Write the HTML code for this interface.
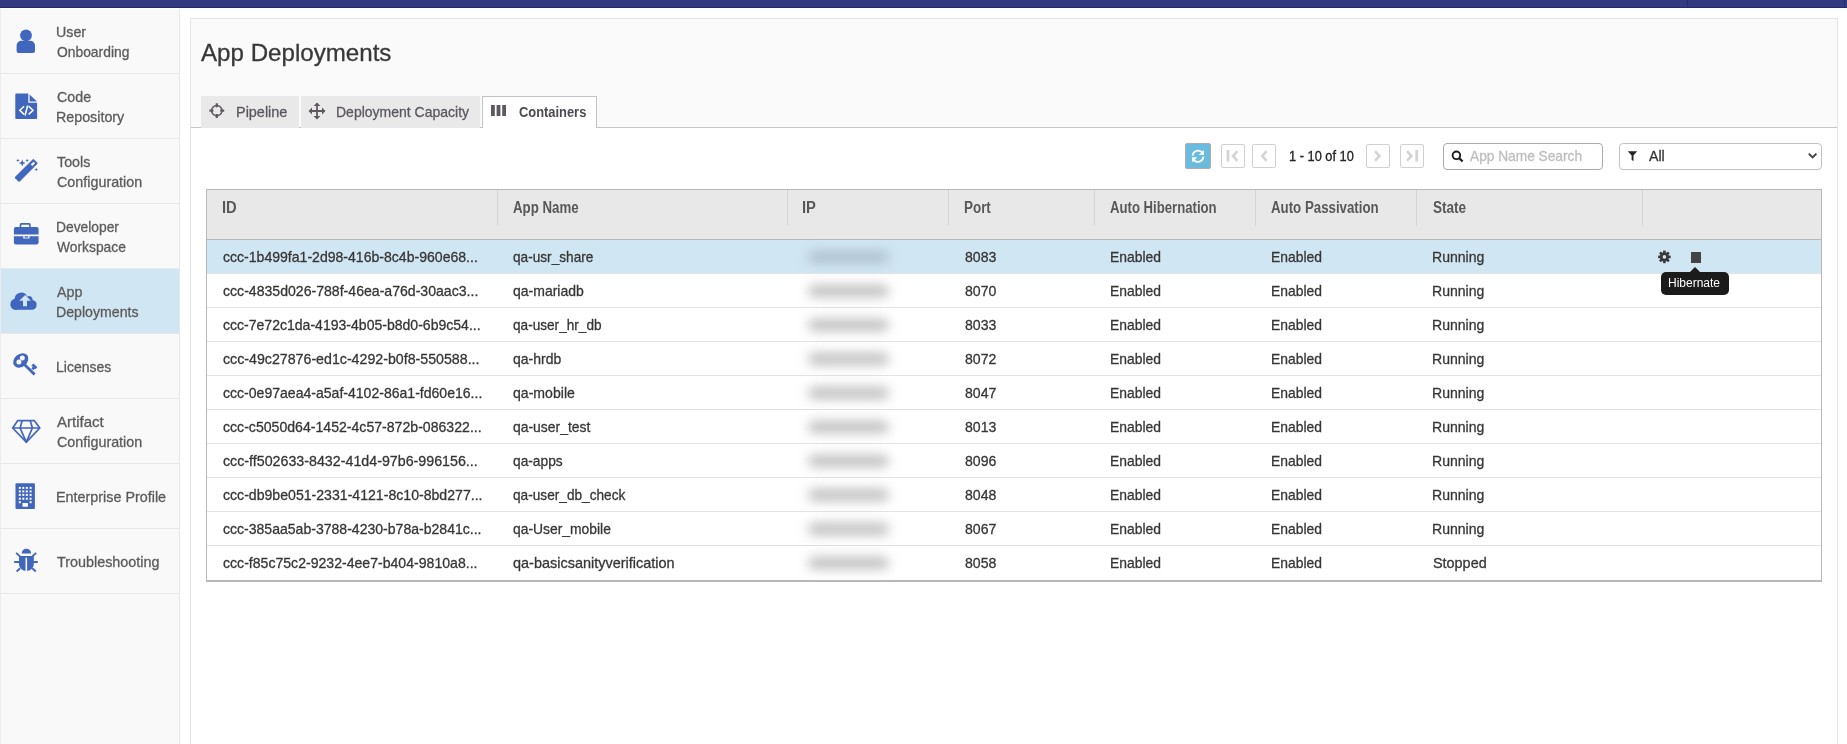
<!DOCTYPE html>
<html><head><meta charset="utf-8"><style>
*{box-sizing:border-box;margin:0;padding:0}
html,body{width:1847px;height:744px;overflow:hidden;background:#fff;font-family:"Liberation Sans",sans-serif}
.a{position:absolute}
.tx{position:absolute;white-space:nowrap;line-height:1;font-family:"Liberation Sans",sans-serif;-webkit-text-stroke:0.3px currentColor}
</style></head><body>
<div class="a" style="left:0px;top:0px;width:1847px;height:7px;background:#323a80;"></div><div class="a" style="left:0px;top:7px;width:1847px;height:1px;background:#232a73;"></div><div class="a" style="left:1687px;top:0px;width:1px;height:8px;background:#262c66;"></div><div class="a" style="left:1844px;top:0px;width:1px;height:8px;background:#262c66;"></div><div class="a" style="left:0px;top:9px;width:180px;height:735px;background:#f9f9f9;"></div><div class="a" style="left:0px;top:9px;width:1px;height:735px;background:#ececec;"></div><div class="a" style="left:179px;top:9px;width:1px;height:735px;background:#e6e6e6;"></div><div class="a" style="left:1px;top:73px;width:178px;height:1px;background:#e8e8e8;"></div><div class="a" style="left:1px;top:138px;width:178px;height:1px;background:#e8e8e8;"></div><div class="a" style="left:1px;top:203px;width:178px;height:1px;background:#e8e8e8;"></div><div class="a" style="left:1px;top:268px;width:178px;height:1px;background:#e8e8e8;"></div><div class="a" style="left:1px;top:333px;width:178px;height:1px;background:#e8e8e8;"></div><div class="a" style="left:1px;top:398px;width:178px;height:1px;background:#e8e8e8;"></div><div class="a" style="left:1px;top:463px;width:178px;height:1px;background:#e8e8e8;"></div><div class="a" style="left:1px;top:528px;width:178px;height:1px;background:#e8e8e8;"></div><div class="a" style="left:1px;top:593px;width:178px;height:1px;background:#e8e8e8;"></div><div class="a" style="left:1px;top:269px;width:178px;height:64px;background:#d1e6f3;"></div><div class="a" style="left:190px;top:18px;width:1648px;height:109px;background:#fafafa;"></div><div class="a" style="left:190px;top:18px;width:1648px;height:1px;background:#e4e4e4;"></div><div class="a" style="left:190px;top:18px;width:1px;height:726px;background:#e4e4e4;"></div><div class="a" style="left:1837px;top:18px;width:1px;height:726px;background:#e4e4e4;"></div><div class="a" style="left:191px;top:127px;width:1646px;height:1px;background:#c4c4c4;"></div><div class="a" style="left:201px;top:96px;width:98px;height:32px;background:#e9e9e9;"></div><div class="a" style="left:301px;top:96px;width:179px;height:32px;background:#e9e9e9;"></div><div class="a" style="left:482px;top:96px;width:115px;height:32px;background:#fff;"></div><div class="a" style="left:482px;top:96px;width:115px;height:1px;background:#c4c4c4;"></div><div class="a" style="left:482px;top:96px;width:1px;height:32px;background:#c4c4c4;"></div><div class="a" style="left:596px;top:96px;width:1px;height:32px;background:#c4c4c4;"></div><svg class="a" style="left:0;top:0" width="700" height="140" viewBox="0 0 700 140">
<g fill="none" stroke="#5e5860">
 <circle cx="216.8" cy="110.6" r="5.2" stroke-width="1.5"/>
 <path d="M216.8 103.2v4M216.8 114v4M209.4 110.6h4M220.2 110.6h4" stroke-width="2.2"/>
 <path d="M317 103.5v15M309.5 111h15" stroke-width="1.8"/>
</g>
<g fill="#5e5860">
 <path d="M317 102.6l3.4 3.4h-6.8zM317 119.4l3.4-3.4h-6.8zM308.6 111l3.4-3.4v6.8zM325.4 111l-3.4-3.4v6.8z"/>
 <rect x="491" y="105" width="3.8" height="11"/><rect x="496.6" y="105" width="3.8" height="11"/><rect x="502.2" y="105" width="3.8" height="11"/>
</g>
</svg><div class="a" style="left:1185px;top:143px;width:26px;height:26px;background:#6bbbde;border:1px solid #b5aaa5;border-radius:2px"></div><svg class="a" style="left:1185px;top:143px" width="26" height="26" viewBox="0 0 26 26">
<path d="M7.6 12.6A5.6 5.6 0 0 1 17.6 9.8" fill="none" stroke="#fff" stroke-width="1.8"/><path d="M18.9 6.9v5.2h-5.2z" fill="#fff"/>
<path d="M18.4 13.6A5.6 5.6 0 0 1 8.4 16.6" fill="none" stroke="#fff" stroke-width="1.8"/><path d="M7.1 19.4v-5.2h5.2z" fill="#fff"/>
</svg><div class="a" style="left:1221px;top:144px;width:24px;height:24px;border:1px solid #d0d0d0;border-radius:2px;background:#fff"></div><div class="a" style="left:1252px;top:144px;width:24px;height:24px;border:1px solid #d0d0d0;border-radius:2px;background:#fff"></div><div class="a" style="left:1366px;top:144px;width:24px;height:24px;border:1px solid #d0d0d0;border-radius:2px;background:#fff"></div><div class="a" style="left:1400px;top:144px;width:24px;height:24px;border:1px solid #d0d0d0;border-radius:2px;background:#fff"></div><svg class="a" style="left:0;top:0" width="1847" height="200" viewBox="0 0 1847 200" style="pointer-events:none">
<rect x="1226.6" y="150" width="2.8" height="11.6" fill="#d4d4d4"/>
<path d="M1237.4 151.2l-4.4 4.8 4.4 4.8M1266.6 151.2l-4.4 4.8 4.4 4.8M1375 151.2l4.4 4.8-4.4 4.8M1407 151.2l4.4 4.8-4.4 4.8" fill="none" stroke="#d4d4d4" stroke-width="2.6"/>
<rect x="1415.3" y="150" width="2.8" height="11.6" fill="#d4d4d4"/>
</svg><div class="a" style="left:1443px;top:143px;width:160px;height:27px;border:1px solid #aaaaaa;border-radius:4px;background:#fff"></div><svg class="a" style="left:1443px;top:143px" width="30" height="27" viewBox="0 0 30 27">
<circle cx="13.4" cy="12.3" r="3.8" fill="none" stroke="#1e1e1e" stroke-width="1.9"/><path d="M16.2 15.1l3.4 3.4" stroke="#1e1e1e" stroke-width="2.2"/>
</svg><div class="a" style="left:1619px;top:143px;width:203px;height:27px;border:1px solid #c2c2c2;border-radius:4px;background:#fff"></div><svg class="a" style="left:1619px;top:143px" width="203" height="27" viewBox="0 0 203 27">
<path d="M8.8 8.2h9.4L14.5 12.6V18.2L12.6 16.8V12.6z" fill="#262626"/>
<path d="M189.8 10.6l3.8 3.8 3.8-3.8" fill="none" stroke="#444" stroke-width="2"/>
</svg><div class="a" style="left:206px;top:189px;width:1616px;height:393px;background:#b8b8b8;"></div><div class="a" style="left:207px;top:190px;width:1614px;height:49px;background:#e8e8e8;"></div><div class="a" style="left:207px;top:239px;width:1614px;height:1px;background:#b8b8b8;"></div><div class="a" style="left:207px;top:240px;width:1614px;height:33px;background:#d1e6f3;"></div><div class="a" style="left:207px;top:273px;width:1614px;height:1px;background:#e3e3e3;"></div><div class="a" style="left:207px;top:274px;width:1614px;height:33px;background:#fff;"></div><div class="a" style="left:207px;top:307px;width:1614px;height:1px;background:#e3e3e3;"></div><div class="a" style="left:207px;top:308px;width:1614px;height:33px;background:#fff;"></div><div class="a" style="left:207px;top:341px;width:1614px;height:1px;background:#e3e3e3;"></div><div class="a" style="left:207px;top:342px;width:1614px;height:33px;background:#fff;"></div><div class="a" style="left:207px;top:375px;width:1614px;height:1px;background:#e3e3e3;"></div><div class="a" style="left:207px;top:376px;width:1614px;height:33px;background:#fff;"></div><div class="a" style="left:207px;top:409px;width:1614px;height:1px;background:#e3e3e3;"></div><div class="a" style="left:207px;top:410px;width:1614px;height:33px;background:#fff;"></div><div class="a" style="left:207px;top:443px;width:1614px;height:1px;background:#e3e3e3;"></div><div class="a" style="left:207px;top:444px;width:1614px;height:33px;background:#fff;"></div><div class="a" style="left:207px;top:477px;width:1614px;height:1px;background:#e3e3e3;"></div><div class="a" style="left:207px;top:478px;width:1614px;height:33px;background:#fff;"></div><div class="a" style="left:207px;top:511px;width:1614px;height:1px;background:#e3e3e3;"></div><div class="a" style="left:207px;top:512px;width:1614px;height:33px;background:#fff;"></div><div class="a" style="left:207px;top:545px;width:1614px;height:1px;background:#e3e3e3;"></div><div class="a" style="left:207px;top:546px;width:1614px;height:33px;background:#fff;"></div><div class="a" style="left:207px;top:579px;width:1614px;height:1px;background:#fff;"></div><div class="a" style="left:497px;top:190px;width:1px;height:36px;background:#d5d5d5;"></div><div class="a" style="left:787px;top:190px;width:1px;height:36px;background:#d5d5d5;"></div><div class="a" style="left:948px;top:190px;width:1px;height:36px;background:#d5d5d5;"></div><div class="a" style="left:1094px;top:190px;width:1px;height:36px;background:#d5d5d5;"></div><div class="a" style="left:1255px;top:190px;width:1px;height:36px;background:#d5d5d5;"></div><div class="a" style="left:1416px;top:190px;width:1px;height:36px;background:#d5d5d5;"></div><div class="a" style="left:1642px;top:190px;width:1px;height:36px;background:#d5d5d5;"></div><div class="a" style="left:808px;top:251px;width:81px;height:12px;background:#adbfcc;filter:blur(6px);border-radius:6px"></div><div class="a" style="left:808px;top:285px;width:81px;height:12px;background:#bebebe;filter:blur(6px);border-radius:6px"></div><div class="a" style="left:808px;top:319px;width:81px;height:12px;background:#bebebe;filter:blur(6px);border-radius:6px"></div><div class="a" style="left:808px;top:353px;width:81px;height:12px;background:#bebebe;filter:blur(6px);border-radius:6px"></div><div class="a" style="left:808px;top:387px;width:81px;height:12px;background:#bebebe;filter:blur(6px);border-radius:6px"></div><div class="a" style="left:808px;top:421px;width:81px;height:12px;background:#bebebe;filter:blur(6px);border-radius:6px"></div><div class="a" style="left:808px;top:455px;width:81px;height:12px;background:#bebebe;filter:blur(6px);border-radius:6px"></div><div class="a" style="left:808px;top:489px;width:81px;height:12px;background:#bebebe;filter:blur(6px);border-radius:6px"></div><div class="a" style="left:808px;top:523px;width:81px;height:12px;background:#bebebe;filter:blur(6px);border-radius:6px"></div><div class="a" style="left:808px;top:557px;width:81px;height:12px;background:#bebebe;filter:blur(6px);border-radius:6px"></div><svg class="a" style="left:1656px;top:249px" width="16" height="16" viewBox="0 0 16 16">
<g fill="#3a3a3a"><circle cx="8.4" cy="7.9" r="4.6"/>
<rect x="7.1" y="1.6" width="2.6" height="12.6"/><rect x="2.1" y="6.6" width="12.6" height="2.6"/>
<rect x="7.1" y="1.6" width="2.6" height="12.6" transform="rotate(45 8.4 7.9)"/><rect x="7.1" y="1.6" width="2.6" height="12.6" transform="rotate(-45 8.4 7.9)"/></g>
<circle cx="8.4" cy="7.9" r="1.8" fill="#d1e6f3"/>
</svg><div class="a" style="left:1691px;top:252px;width:10px;height:11px;background:#444;"></div><div class="a" style="left:1661px;top:272px;width:68px;height:23px;background:#1b1b1b;border-radius:5px"></div><svg class="a" style="left:1689px;top:266px" width="12" height="7" viewBox="0 0 12 7"><path d="M0.5 6.5L6 1 11.5 6.5z" fill="#1b1b1b"/></svg>
<svg id="icons" style="position:absolute;left:0;top:0" width="180" height="744" viewBox="0 0 180 744">
<g fill="#4066be">
 <!-- user -->
 <circle cx="26" cy="35.3" r="5.9"/>
 <path d="M21.6 40.8h8.8a4.6 4.6 0 0 1 4.6 4.6v5.6a1.9 1.9 0 0 1-1.9 1.9H18.5a1.9 1.9 0 0 1-1.9-1.9v-5.6a4.6 4.6 0 0 1 4.6-4.6z"/>
 <!-- code file -->
 <path d="M16.3 93.6h12v9.2h8.8v15.1a1 1 0 0 1-1 1H16.3a1 1 0 0 1-1-1V94.6a1 1 0 0 1 1-1z"/>
 <path d="M29.6 94.4l7.3 7.2h-7.3z"/>
</g>
<g fill="none" stroke="#fff" stroke-width="1.5">
 <path d="M24.1 106.2l-4.3 4.1 4.3 4.1M28.7 106.2l4.3 4.1-4.3 4.1M27.6 105.5l-2.5 10"/>
</g>
<g fill="#4066be">
 <!-- wand -->
 <path d="M15.2 176.8l17.4-17.4a1 1 0 0 1 1.4 0l3.2 3.2a1 1 0 0 1 0 1.4L19.8 181.4a1 1 0 0 1-1.4 0l-3.2-3.2a1 1 0 0 1 0-1.4z"/>
 <path d="M22.2 159.6l0.9 2.5 2.5 0.9-2.5 0.9-0.9 2.5-0.9-2.5-2.5-0.9 2.5-0.9z"/>
 <path d="M17.9 158.6l0.5 1.3 1.3 0.5-1.3 0.5-0.5 1.3-0.5-1.3-1.3-0.5 1.3-0.5z"/>
 <path d="M27.1 158.6l0.5 1.3 1.3 0.5-1.3 0.5-0.5 1.3-0.5-1.3-1.3-0.5 1.3-0.5z"/>
 <path d="M36.2 167.8l0.5 1.3 1.3 0.5-1.3 0.5-0.5 1.3-0.5-1.3-1.3-0.5 1.3-0.5z"/>
</g>
<path d="M30.7 164.5l2.8-2.8 1.6 1.6-2.8 2.8z" fill="#fff"/>
<g fill="#4066be">
 <!-- briefcase -->
 <path d="M21.2 223.1h8a1.5 1.5 0 0 1 1.5 1.5v2.9h-1.6v-2.8h-7.8v2.8h-1.6v-2.9a1.5 1.5 0 0 1 1.5-1.5z"/>
 <path d="M15.9 227.1h20.7a2 2 0 0 1 2 2v5.3H13.9v-5.3a2 2 0 0 1 2-2z"/>
 <path d="M13.9 236.2h9.4v2.4h6.2v-2.4h9.1v6.4a2 2 0 0 1-2 2H15.9a2 2 0 0 1-2-2z"/>
 <rect x="24.6" y="236.3" width="3.6" height="1.4"/>
 <!-- cloud -->
 <path d="M17.3 309.8h14.4a5 5 0 0 0 0.9-9.9a3.6 3.6 0 0 0-5.4-3.4a6.6 6.6 0 0 0-12.6 2.3a5.6 5.6 0 0 0 2.7 11z"/>
</g>
<path d="M25.2 295.1l5.6 5.6h-3.8v5.6h-4v-5.6h-3.8z" fill="#d1e6f3"/>
<g fill="#4066be">
 <!-- key -->
 <ellipse cx="20.8" cy="360.4" rx="8.3" ry="6.4" transform="rotate(-40 20.8 360.4)"/>
</g>
<g fill="#f8f8f8"><circle cx="22.3" cy="358.0" r="2.5"/><circle cx="18.9" cy="361.9" r="2.5"/></g>
<g fill="none" stroke="#4066be" stroke-width="2.8" stroke-linecap="butt">
 <path d="M24.2 364.3l10.4 10.3M32.4 364.4l4 3.9M32.3 369.2l2.2-2.2"/>
</g>
<g fill="none" stroke="#4066be" stroke-width="1.7" stroke-linejoin="round">
 <!-- diamond -->
 <path d="M17.8 420.6h16.4l5.6 7.4-13.5 14.2-13.6-14.2z"/>
 <path d="M12.7 428h27.1M22.2 420.6l-2.1 7.4 6.2 14.2 6.1-14.2-2.2-7.4"/>
</g>
<g fill="#4066be">
 <!-- building -->
 <rect x="15.5" y="483.3" width="19.4" height="25.6" rx="1"/>
</g>
<g fill="#fff">
 <rect x="18.8" y="486.9" width="2" height="2"/><rect x="18.8" y="490.4" width="2" height="2"/><rect x="18.8" y="493.9" width="2" height="2"/><rect x="18.8" y="497.7" width="2" height="2"/><rect x="22.3" y="486.9" width="2" height="2"/><rect x="22.3" y="490.4" width="2" height="2"/><rect x="22.3" y="493.9" width="2" height="2"/><rect x="22.3" y="497.7" width="2" height="2"/><rect x="25.8" y="486.9" width="2" height="2"/><rect x="25.8" y="490.4" width="2" height="2"/><rect x="25.8" y="493.9" width="2" height="2"/><rect x="25.8" y="497.7" width="2" height="2"/><rect x="29.6" y="486.9" width="2" height="2"/><rect x="29.6" y="490.4" width="2" height="2"/><rect x="29.6" y="493.9" width="2" height="2"/><rect x="29.6" y="497.7" width="2" height="2"/><rect x="18.8" y="501.2" width="2" height="2"/><rect x="29.6" y="501.2" width="2" height="2"/>
 <rect x="22.5" y="503" width="5.4" height="3.7"/>
</g>
<g fill="#4066be">
 <!-- bug -->
 <path d="M21.7 553.4a4.7 4.7 0 0 1 9.4 0z"/>
 <path d="M19 555.9h14.8v7.8c0 4.2-3.3 7.2-7.4 7.2s-7.4-3-7.4-7.2z"/>
</g>
<path d="M26.3 557.7v13.4" stroke="#f8f8f8" stroke-width="1.6"/>
<g fill="none" stroke="#4066be" stroke-width="1.9">
 <path d="M16.1 552.9l3.9 3.5M36.2 552.9l-3.9 3.5M14.2 562h5.4M32.8 562h5M16.6 571.5l3.6-3.3M35.8 571.5l-3.6-3.3"/>
</g>
</svg>
<span id="s0a" class="tx" style="left:55.80px;top:24.30px;font-size:15px;color:#5b5b5b;transform:scaleX(0.95);transform-origin:0 0;">User</span>
<span id="s0b" class="tx" style="left:56.80px;top:44.30px;font-size:15px;color:#5b5b5b;transform:scaleX(0.9231);transform-origin:0 0;">Onboarding</span>
<span id="s1a" class="tx" style="left:56.80px;top:89.30px;font-size:15px;color:#5b5b5b;transform:scaleX(0.95);transform-origin:0 0;">Code</span>
<span id="s1b" class="tx" style="left:55.80px;top:109.30px;font-size:15px;color:#5b5b5b;transform:scaleX(0.9516);transform-origin:0 0;">Repository</span>
<span id="s2a" class="tx" style="left:56.80px;top:154.30px;font-size:15px;color:#5b5b5b;transform:scaleX(0.95);transform-origin:0 0;">Tools</span>
<span id="s2b" class="tx" style="left:56.80px;top:174.30px;font-size:15px;color:#5b5b5b;transform:scaleX(0.9551);transform-origin:0 0;">Configuration</span>
<span id="s3a" class="tx" style="left:55.80px;top:219.30px;font-size:15px;color:#5b5b5b;transform:scaleX(0.9208);transform-origin:0 0;">Developer</span>
<span id="s3b" class="tx" style="left:56.80px;top:239.30px;font-size:15px;color:#5b5b5b;transform:scaleX(0.9213);transform-origin:0 0;">Workspace</span>
<span id="s4a" class="tx" style="left:56.80px;top:284.30px;font-size:15px;color:#5b5b5b;transform:scaleX(0.95);transform-origin:0 0;">App</span>
<span id="s4b" class="tx" style="left:55.80px;top:304.30px;font-size:15px;color:#5b5b5b;transform:scaleX(0.9426);transform-origin:0 0;">Deployments</span>
<span id="s5a" class="tx" style="left:55.80px;top:358.60px;font-size:15px;color:#5b5b5b;transform:scaleX(0.9323);transform-origin:0 0;">Licenses</span>
<span id="s6a" class="tx" style="left:56.80px;top:414.30px;font-size:15px;color:#5b5b5b;transform:scaleX(1.0006);transform-origin:0 0;">Artifact</span>
<span id="s6b" class="tx" style="left:56.80px;top:434.30px;font-size:15px;color:#5b5b5b;transform:scaleX(0.9551);transform-origin:0 0;">Configuration</span>
<span id="s7a" class="tx" style="left:55.80px;top:488.60px;font-size:15px;color:#5b5b5b;transform:scaleX(0.9567);transform-origin:0 0;">Enterprise Profile</span>
<span id="s8a" class="tx" style="left:56.80px;top:553.60px;font-size:15px;color:#5b5b5b;transform:scaleX(0.9576);transform-origin:0 0;">Troubleshooting</span>
<span id="title" class="tx" style="left:200.70px;top:40.68px;font-size:24px;color:#383838;transform:scaleX(1.0053);transform-origin:0 0;">App Deployments</span>
<span id="tab1" class="tx" style="left:236.10px;top:104.30px;font-size:15px;color:#5c5760;transform:scaleX(0.9626);transform-origin:0 0;">Pipeline</span>
<span id="tab2" class="tx" style="left:336.40px;top:104.30px;font-size:15px;color:#5c5760;transform:scaleX(0.9331);transform-origin:0 0;">Deployment Capacity</span>
<span id="tab3" class="tx" style="left:519.30px;top:104.30px;font-size:15px;color:#4d4950;font-weight:bold;-webkit-text-stroke:0;transform:scaleX(0.8590);transform-origin:0 0;">Containers</span>
<span id="pg" class="tx" style="left:1289.10px;top:149.15px;font-size:14px;color:#222;transform:scaleX(0.9155);transform-origin:0 0;">1 - 10 of 10</span>
<span id="ph" class="tx" style="left:1469.50px;top:148.30px;font-size:15px;color:#bdbdbd;transform:scaleX(0.9140);transform-origin:0 0;">App Name Search</span>
<span id="all" class="tx" style="left:1649.40px;top:148.30px;font-size:15px;color:#333;transform:scaleX(0.9435);transform-origin:0 0;">All</span>
<span id="h0" class="tx" style="left:222.00px;top:199.76px;font-size:16px;color:#585858;font-weight:bold;-webkit-text-stroke:0;transform:scaleX(0.92);transform-origin:0 0;">ID</span>
<span id="h1" class="tx" style="left:512.50px;top:199.76px;font-size:16px;color:#585858;font-weight:bold;-webkit-text-stroke:0;transform:scaleX(0.8284);transform-origin:0 0;">App Name</span>
<span id="h2" class="tx" style="left:802.40px;top:199.76px;font-size:16px;color:#585858;font-weight:bold;-webkit-text-stroke:0;transform:scaleX(0.92);transform-origin:0 0;">IP</span>
<span id="h3" class="tx" style="left:964.00px;top:199.76px;font-size:16px;color:#585858;font-weight:bold;-webkit-text-stroke:0;transform:scaleX(0.8387);transform-origin:0 0;">Port</span>
<span id="h4" class="tx" style="left:1110.00px;top:199.76px;font-size:16px;color:#585858;font-weight:bold;-webkit-text-stroke:0;transform:scaleX(0.8217);transform-origin:0 0;">Auto Hibernation</span>
<span id="h5" class="tx" style="left:1271.20px;top:199.76px;font-size:16px;color:#585858;font-weight:bold;-webkit-text-stroke:0;transform:scaleX(0.8295);transform-origin:0 0;">Auto Passivation</span>
<span id="h6" class="tx" style="left:1433.00px;top:199.76px;font-size:16px;color:#585858;font-weight:bold;-webkit-text-stroke:0;transform:scaleX(0.8462);transform-origin:0 0;">State</span>
<span id="r0a" class="tx" style="left:222.50px;top:249.30px;font-size:15px;color:#363636;transform:scaleX(0.9373);transform-origin:0 0;">ccc-1b499fa1-2d98-416b-8c4b-960e68...</span>
<span id="r0b" class="tx" style="left:512.60px;top:249.30px;font-size:15px;color:#363636;transform:scaleX(0.9092);transform-origin:0 0;">qa-usr_share</span>
<span id="r0c" class="tx" style="left:964.90px;top:249.30px;font-size:15px;color:#363636;transform:scaleX(0.9394);transform-origin:0 0;">8083</span>
<span id="r0d" class="tx" style="left:1109.50px;top:249.30px;font-size:15px;color:#363636;transform:scaleX(0.9262);transform-origin:0 0;">Enabled</span>
<span id="r0e" class="tx" style="left:1270.80px;top:249.30px;font-size:15px;color:#363636;transform:scaleX(0.9262);transform-origin:0 0;">Enabled</span>
<span id="r0f" class="tx" style="left:1431.60px;top:249.30px;font-size:15px;color:#363636;transform:scaleX(0.9365);transform-origin:0 0;">Running</span>
<span id="r1a" class="tx" style="left:222.50px;top:283.30px;font-size:15px;color:#363636;transform:scaleX(0.9391);transform-origin:0 0;">ccc-4835d026-788f-46ea-a76d-30aac3...</span>
<span id="r1b" class="tx" style="left:512.60px;top:283.30px;font-size:15px;color:#363636;transform:scaleX(0.9336);transform-origin:0 0;">qa-mariadb</span>
<span id="r1c" class="tx" style="left:964.90px;top:283.30px;font-size:15px;color:#363636;transform:scaleX(0.9394);transform-origin:0 0;">8070</span>
<span id="r1d" class="tx" style="left:1109.50px;top:283.30px;font-size:15px;color:#363636;transform:scaleX(0.9262);transform-origin:0 0;">Enabled</span>
<span id="r1e" class="tx" style="left:1270.80px;top:283.30px;font-size:15px;color:#363636;transform:scaleX(0.9262);transform-origin:0 0;">Enabled</span>
<span id="r1f" class="tx" style="left:1431.60px;top:283.30px;font-size:15px;color:#363636;transform:scaleX(0.9365);transform-origin:0 0;">Running</span>
<span id="r2a" class="tx" style="left:222.50px;top:317.30px;font-size:15px;color:#363636;transform:scaleX(0.9361);transform-origin:0 0;">ccc-7e72c1da-4193-4b05-b8d0-6b9c54...</span>
<span id="r2b" class="tx" style="left:512.60px;top:317.30px;font-size:15px;color:#363636;transform:scaleX(0.9075);transform-origin:0 0;">qa-user_hr_db</span>
<span id="r2c" class="tx" style="left:964.90px;top:317.30px;font-size:15px;color:#363636;transform:scaleX(0.9394);transform-origin:0 0;">8033</span>
<span id="r2d" class="tx" style="left:1109.50px;top:317.30px;font-size:15px;color:#363636;transform:scaleX(0.9262);transform-origin:0 0;">Enabled</span>
<span id="r2e" class="tx" style="left:1270.80px;top:317.30px;font-size:15px;color:#363636;transform:scaleX(0.9262);transform-origin:0 0;">Enabled</span>
<span id="r2f" class="tx" style="left:1431.60px;top:317.30px;font-size:15px;color:#363636;transform:scaleX(0.9365);transform-origin:0 0;">Running</span>
<span id="r3a" class="tx" style="left:222.50px;top:351.30px;font-size:15px;color:#363636;transform:scaleX(0.9463);transform-origin:0 0;">ccc-49c27876-ed1c-4292-b0f8-550588...</span>
<span id="r3b" class="tx" style="left:512.60px;top:351.30px;font-size:15px;color:#363636;transform:scaleX(0.9318);transform-origin:0 0;">qa-hrdb</span>
<span id="r3c" class="tx" style="left:964.90px;top:351.30px;font-size:15px;color:#363636;transform:scaleX(0.9394);transform-origin:0 0;">8072</span>
<span id="r3d" class="tx" style="left:1109.50px;top:351.30px;font-size:15px;color:#363636;transform:scaleX(0.9262);transform-origin:0 0;">Enabled</span>
<span id="r3e" class="tx" style="left:1270.80px;top:351.30px;font-size:15px;color:#363636;transform:scaleX(0.9262);transform-origin:0 0;">Enabled</span>
<span id="r3f" class="tx" style="left:1431.60px;top:351.30px;font-size:15px;color:#363636;transform:scaleX(0.9365);transform-origin:0 0;">Running</span>
<span id="r4a" class="tx" style="left:222.50px;top:385.30px;font-size:15px;color:#363636;transform:scaleX(0.9366);transform-origin:0 0;">ccc-0e97aea4-a5af-4102-86a1-fd60e16...</span>
<span id="r4b" class="tx" style="left:512.60px;top:385.30px;font-size:15px;color:#363636;transform:scaleX(0.9388);transform-origin:0 0;">qa-mobile</span>
<span id="r4c" class="tx" style="left:964.90px;top:385.30px;font-size:15px;color:#363636;transform:scaleX(0.9394);transform-origin:0 0;">8047</span>
<span id="r4d" class="tx" style="left:1109.50px;top:385.30px;font-size:15px;color:#363636;transform:scaleX(0.9262);transform-origin:0 0;">Enabled</span>
<span id="r4e" class="tx" style="left:1270.80px;top:385.30px;font-size:15px;color:#363636;transform:scaleX(0.9262);transform-origin:0 0;">Enabled</span>
<span id="r4f" class="tx" style="left:1431.60px;top:385.30px;font-size:15px;color:#363636;transform:scaleX(0.9365);transform-origin:0 0;">Running</span>
<span id="r5a" class="tx" style="left:222.50px;top:419.30px;font-size:15px;color:#363636;transform:scaleX(0.9398);transform-origin:0 0;">ccc-c5050d64-1452-4c57-872b-086322...</span>
<span id="r5b" class="tx" style="left:512.60px;top:419.30px;font-size:15px;color:#363636;transform:scaleX(0.9279);transform-origin:0 0;">qa-user_test</span>
<span id="r5c" class="tx" style="left:964.90px;top:419.30px;font-size:15px;color:#363636;transform:scaleX(0.9394);transform-origin:0 0;">8013</span>
<span id="r5d" class="tx" style="left:1109.50px;top:419.30px;font-size:15px;color:#363636;transform:scaleX(0.9262);transform-origin:0 0;">Enabled</span>
<span id="r5e" class="tx" style="left:1270.80px;top:419.30px;font-size:15px;color:#363636;transform:scaleX(0.9262);transform-origin:0 0;">Enabled</span>
<span id="r5f" class="tx" style="left:1431.60px;top:419.30px;font-size:15px;color:#363636;transform:scaleX(0.9365);transform-origin:0 0;">Running</span>
<span id="r6a" class="tx" style="left:222.50px;top:453.30px;font-size:15px;color:#363636;transform:scaleX(0.9495);transform-origin:0 0;">ccc-ff502633-8432-41d4-97b6-996156...</span>
<span id="r6b" class="tx" style="left:512.60px;top:453.30px;font-size:15px;color:#363636;transform:scaleX(0.9167);transform-origin:0 0;">qa-apps</span>
<span id="r6c" class="tx" style="left:964.90px;top:453.30px;font-size:15px;color:#363636;transform:scaleX(0.9394);transform-origin:0 0;">8096</span>
<span id="r6d" class="tx" style="left:1109.50px;top:453.30px;font-size:15px;color:#363636;transform:scaleX(0.9262);transform-origin:0 0;">Enabled</span>
<span id="r6e" class="tx" style="left:1270.80px;top:453.30px;font-size:15px;color:#363636;transform:scaleX(0.9262);transform-origin:0 0;">Enabled</span>
<span id="r6f" class="tx" style="left:1431.60px;top:453.30px;font-size:15px;color:#363636;transform:scaleX(0.9365);transform-origin:0 0;">Running</span>
<span id="r7a" class="tx" style="left:222.50px;top:487.30px;font-size:15px;color:#363636;transform:scaleX(0.9400);transform-origin:0 0;">ccc-db9be051-2331-4121-8c10-8bd277...</span>
<span id="r7b" class="tx" style="left:512.60px;top:487.30px;font-size:15px;color:#363636;transform:scaleX(0.9106);transform-origin:0 0;">qa-user_db_check</span>
<span id="r7c" class="tx" style="left:964.90px;top:487.30px;font-size:15px;color:#363636;transform:scaleX(0.9394);transform-origin:0 0;">8048</span>
<span id="r7d" class="tx" style="left:1109.50px;top:487.30px;font-size:15px;color:#363636;transform:scaleX(0.9262);transform-origin:0 0;">Enabled</span>
<span id="r7e" class="tx" style="left:1270.80px;top:487.30px;font-size:15px;color:#363636;transform:scaleX(0.9262);transform-origin:0 0;">Enabled</span>
<span id="r7f" class="tx" style="left:1431.60px;top:487.30px;font-size:15px;color:#363636;transform:scaleX(0.9365);transform-origin:0 0;">Running</span>
<span id="r8a" class="tx" style="left:222.50px;top:521.30px;font-size:15px;color:#363636;transform:scaleX(0.9364);transform-origin:0 0;">ccc-385aa5ab-3788-4230-b78a-b2841c...</span>
<span id="r8b" class="tx" style="left:512.60px;top:521.30px;font-size:15px;color:#363636;transform:scaleX(0.9246);transform-origin:0 0;">qa-User_mobile</span>
<span id="r8c" class="tx" style="left:964.90px;top:521.30px;font-size:15px;color:#363636;transform:scaleX(0.9394);transform-origin:0 0;">8067</span>
<span id="r8d" class="tx" style="left:1109.50px;top:521.30px;font-size:15px;color:#363636;transform:scaleX(0.9262);transform-origin:0 0;">Enabled</span>
<span id="r8e" class="tx" style="left:1270.80px;top:521.30px;font-size:15px;color:#363636;transform:scaleX(0.9262);transform-origin:0 0;">Enabled</span>
<span id="r8f" class="tx" style="left:1431.60px;top:521.30px;font-size:15px;color:#363636;transform:scaleX(0.9365);transform-origin:0 0;">Running</span>
<span id="r9a" class="tx" style="left:222.50px;top:555.30px;font-size:15px;color:#363636;transform:scaleX(0.9389);transform-origin:0 0;">ccc-f85c75c2-9232-4ee7-b404-9810a8...</span>
<span id="r9b" class="tx" style="left:512.60px;top:555.30px;font-size:15px;color:#363636;transform:scaleX(0.9641);transform-origin:0 0;">qa-basicsanityverification</span>
<span id="r9c" class="tx" style="left:964.90px;top:555.30px;font-size:15px;color:#363636;transform:scaleX(0.9394);transform-origin:0 0;">8058</span>
<span id="r9d" class="tx" style="left:1109.50px;top:555.30px;font-size:15px;color:#363636;transform:scaleX(0.9262);transform-origin:0 0;">Enabled</span>
<span id="r9e" class="tx" style="left:1270.80px;top:555.30px;font-size:15px;color:#363636;transform:scaleX(0.9262);transform-origin:0 0;">Enabled</span>
<span id="r9f" class="tx" style="left:1432.60px;top:555.30px;font-size:15px;color:#363636;transform:scaleX(0.96);transform-origin:0 0;">Stopped</span>
<span id="tip" class="tx" style="left:1668.20px;top:276.64px;font-size:12px;color:#fff;transform:scaleX(1.0002);transform-origin:0 0;-webkit-text-stroke:0;">Hibernate</span>
</body></html>
